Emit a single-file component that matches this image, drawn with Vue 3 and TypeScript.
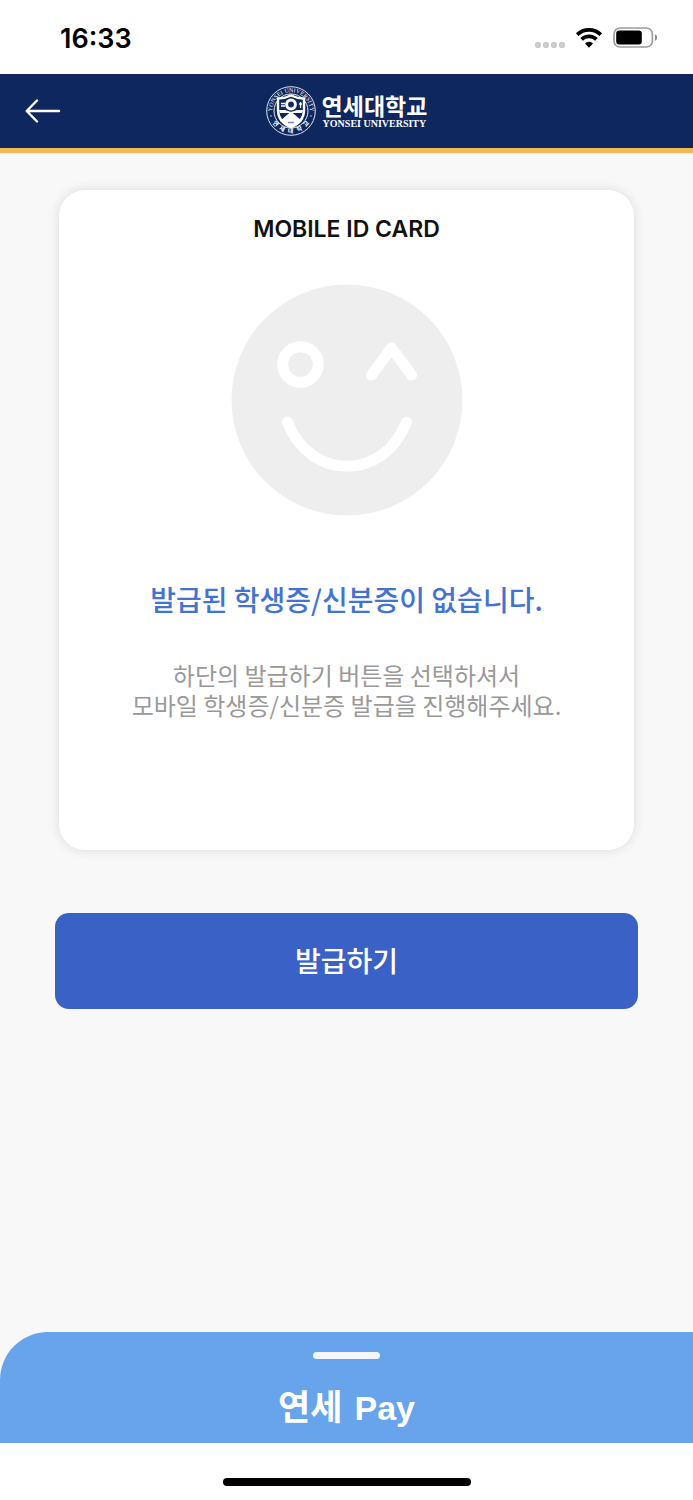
<script setup lang="ts">
import { ref } from 'vue'

interface SealGlyph {
  char: string
  angle: number
}

const time = ref<string>('16:33')
const signalDots: number[] = [1, 2, 3, 4]
const sealGlyphs: SealGlyph[] = [
  { char: '연', angle: 50 },
  { char: '세', angle: 26 },
  { char: '대', angle: 1 },
  { char: '학', angle: -25 },
  { char: '교', angle: -50 },
]
</script>

<template>
  <div class="screen">
    <div class="status">
      <span class="time">{{ time }}</span>
      <div class="indicators">
        <span class="dots"><i v-for="d in signalDots" :key="d" class="dot"></i></span>
        <svg class="wifi" width="28" height="22" viewBox="0 0 28 22" aria-hidden="true">
          <g fill="none" stroke="#000" stroke-width="3.8">
            <path d="M2.2 7.6a17 17 0 0 1 23.6 0" />
            <path d="M6.6 12.3a10.7 10.7 0 0 1 14.8 0" />
          </g>
          <path d="M10 16.4a5.8 5.8 0 0 1 8 0l-4 4.3z" />
        </svg>
        <svg class="battery" width="44" height="22" viewBox="0 0 44 22" aria-hidden="true">
          <rect x="1" y="1" width="38.4" height="19" rx="6" fill="none" stroke="#9c9c9c" stroke-width="1.7" />
          <rect x="3.2" y="3.4" width="25.6" height="14.2" rx="3" />
          <path d="M42 7.2c3 1.2 3 5.4 0 6.6z" fill="#8c8c8c" />
        </svg>
      </div>
    </div>

    <header class="bar">
      <button class="back" type="button" aria-label="뒤로">
        <svg width="36" height="24" viewBox="0 0 36 24" fill="none" stroke="#fff" stroke-width="2.4" stroke-linecap="round" stroke-linejoin="round">
          <path d="M2 12H34M12 1.5L1.7 12L12 22.5" />
        </svg>
      </button>
      <div class="brand">
        <svg class="seal" width="50" height="50" viewBox="0 0 50 50" aria-hidden="true">
          <defs>
            <path id="arc-top" d="M6.5 29A18.9 18.9 0 1 1 43.5 29" />
          </defs>
          <circle cx="25" cy="25" r="24.3" fill="none" stroke="#dfe5f1" stroke-width="1" />
          <circle cx="25" cy="25" r="17" fill="none" stroke="#e8edf6" stroke-width="1" />
          <text class="seal-en"><textPath href="#arc-top" startOffset="50%" text-anchor="middle">YONSEI UNIVERSITY</textPath></text>
          <text
            v-for="g in sealGlyphs"
            :key="g.char"
            class="seal-ko"
            x="25"
            y="47"
            text-anchor="middle"
            :transform="`rotate(${g.angle} 25 25)`"
          >{{ g.char }}</text>
          <circle cx="5" cy="30" r="0.7" fill="#fff" />
          <circle cx="45" cy="30" r="0.7" fill="#fff" />
          <path d="M12 12.5Q19 12.5 25 9.5Q31 12.5 38 12.5V24Q38 36 25 41Q12 36 12 24z" fill="#0e275e" stroke="#fff" stroke-width="2.4" stroke-linejoin="round" />
          <path d="M13 24H19L25 26L31 24H37L36 27H14z" fill="#fff" />
          <path d="M25 25.5L36 35L31 39L25 42L19 39L14 35z" fill="#fff" />
          <circle cx="25" cy="18.5" r="4.4" fill="#0e275e" stroke="#fff" stroke-width="3" />
          <path d="M15 17.5h4M15 20h4M34.5 16v6M33 18h3" stroke="#fff" stroke-width="1.3" />
          <path d="M22 36.5h6" stroke="#7687ad" stroke-width="1.5" />
        </svg>
        <div class="wordmark">
          <span class="name-ko">연세대학교</span>
          <span class="name-en">YONSEI UNIVERSITY</span>
        </div>
      </div>
    </header>

    <main class="content">
      <section class="card">
        <h1 class="title">MOBILE ID CARD</h1>
        <svg class="face" width="232" height="232" viewBox="0 0 232 232" aria-hidden="true">
          <circle cx="116" cy="116" r="115.5" fill="#eee" />
          <g fill="none" stroke="#fff" stroke-width="11" stroke-linecap="round" stroke-linejoin="round">
            <circle cx="69.5" cy="80.5" r="17.8" />
            <path d="M140.500 91L160.500 64L180.500 91" />
            <path d="M56.500 138C79 197 153 197 175.500 138" />
          </g>
        </svg>
        <h2 class="notice">발급된 학생증/신분증이 없습니다.</h2>
        <p class="hint">하단의 발급하기 버튼을 선택하셔서<br />모바일 학생증/신분증 발급을 진행해주세요.</p>
      </section>
      <button class="issue" type="button">발급하기</button>
    </main>

    <button class="pay" type="button">
      <span class="grip"></span>
      <span class="pay-label"><span>연세</span> <span class="pay-latin">Pay</span></span>
    </button>
    <div class="home"><span class="home-line"></span></div>
  </div>
</template>

<style>
body {
  margin: 0;
}
</style>

<style scoped>
.screen {
  min-height: 100vh;
  display: flex;
  flex-direction: column;
  background: #f8f8f8;
  font-family: Inter, "Noto Sans CJK KR", sans-serif;
}
button {
  border: 0;
  padding: 0;
  cursor: pointer;
  font-family: inherit;
}
.status {
  height: 74px;
  box-sizing: border-box;
  padding: 2px 36px 0 60px;
  display: flex;
  align-items: center;
  justify-content: space-between;
  background: #fff;
}
.time {
  padding-top: 2px;
  font-size: 27px;
  font-weight: 600;
  line-height: 32px;
}
.indicators {
  display: flex;
  align-items: center;
  gap: 10px;
}
.dots {
  display: flex;
  gap: 2px;
  padding-top: 14px;
}
.dot {
  width: 6px;
  height: 6px;
  border-radius: 2px;
  background: #ccc;
}
.bar {
  height: 79px;
  box-sizing: border-box;
  padding: 0 25px;
  display: grid;
  grid-template-columns: 1fr auto 1fr;
  align-items: center;
  background: #0e275e;
  border-bottom: 5px solid #f4b84f;
}
.back {
  justify-self: start;
  display: flex;
  background: none;
}
.brand {
  display: flex;
  align-items: center;
  gap: 6px;
  color: #fff;
}
.seal-en {
  fill: #fff;
  font: 6px "Liberation Serif", serif;
}
.seal-ko {
  fill: #fff;
  font: bold 6px "Noto Sans CJK KR", sans-serif;
}
.wordmark {
  display: flex;
  flex-direction: column;
}
.name-ko {
  font: bold 23px/26px "Noto Sans CJK KR", sans-serif;
}
.name-en {
  padding-left: 1px;
  font: bold 10px/12px "Liberation Serif", serif;
}
.content {
  flex: 1;
  padding: 37px 55px 0;
}
.card {
  margin: 0 4px;
  min-height: 660px;
  box-sizing: border-box;
  padding: 23px 24px;
  display: flex;
  flex-direction: column;
  align-items: center;
  background: #fff;
  border-radius: 26px;
  box-shadow: 0 0 12px rgba(0, 0, 0, 0.12);
  text-align: center;
}
.title {
  margin: 0 0 39px;
  font-size: 23px;
  font-weight: 600;
  line-height: 32px;
  color: #111;
}
.notice {
  margin: 63px 0 41px;
  font: 500 28px/40px "Noto Sans CJK KR", sans-serif;
  color: #4273d1;
}
.hint {
  margin: 0;
  font: 400 24px/30px "Noto Sans CJK KR", sans-serif;
  color: #999;
}
.issue {
  display: block;
  width: 100%;
  height: 96px;
  margin-top: 63px;
  padding-bottom: 2px;
  border-radius: 14px;
  background: #3a62c6;
  color: #fff;
  font: 500 28px/40px "Noto Sans CJK KR", sans-serif;
}
.pay {
  height: 111px;
  padding-top: 20px;
  display: flex;
  flex-direction: column;
  align-items: center;
  gap: 22px;
  border-radius: 48px 0 0 0;
  background: #68a4eb;
  color: #fff;
}
.grip {
  width: 67px;
  height: 7px;
  border-radius: 4px;
  background: #f2f7fe;
}
.pay-label {
  display: flex;
  align-items: baseline;
  gap: 12px;
  font: bold 35px/48px "Noto Sans CJK KR", sans-serif;
}
.pay-latin {
  font: bold 34px/48px "Liberation Sans", sans-serif;
}
.home {
  height: 57px;
  display: flex;
  align-items: center;
  justify-content: center;
  background: #fff;
}
.home-line {
  width: 248px;
  height: 8px;
  margin-top: 20px;
  border-radius: 4px;
  background: #000;
}
</style>
